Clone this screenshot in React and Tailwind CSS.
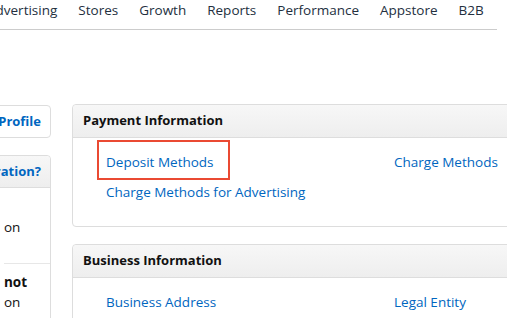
export default function App() {
  const nav = ["Advertising", "Stores", "Growth", "Reports", "Performance", "Appstore", "B2B"];
  return (
    <div className="w-[507px] h-[318px] overflow-hidden bg-white font-['Open_Sans',sans-serif] text-[13.5px]">
      <div className="w-[497px] h-[30px] border-b border-[#cccccc] overflow-hidden">
        <div className="flex gap-[21px] -ml-[13px] leading-[20px] text-[#232f3e]">
          {nav.map((n) => (
            <span key={n} className="whitespace-nowrap">{n}</span>
          ))}
        </div>
      </div>
      <div className="flex gap-[21px] w-[497px]">
        <div className="w-[51px] shrink-0 overflow-hidden pt-[75px]">
          <div className="w-[200px] -ml-[149px]">
            <div className="h-[33px] border border-[#dddddd] rounded-[4px] flex items-center justify-end pr-[9px] font-bold text-[13px] text-[#0066c0] whitespace-nowrap">
              View Your Profile
            </div>
            <div className="mt-[17px] border border-[#dddddd] rounded-t-[4px] h-[200px]">
              <div className="h-[32px] bg-gradient-to-b from-[#f7f7f7] to-[#eeeeee] border-b border-[#dddddd] rounded-t-[4px] flex items-center justify-end pr-[9px] font-bold text-[13px] text-[#0066c0] whitespace-nowrap">
                Need help with registration?
              </div>
              <div className="pl-[152px] text-[#111111] leading-[20px]">
                <div className="pt-[29px] pb-[26px] whitespace-nowrap">on</div>
                <div className="border-t border-[#e7e7e7] pt-[8px]">
                  <div className="font-bold">not</div>
                  <div>on</div>
                </div>
              </div>
            </div>
          </div>
        </div>
        <div className="flex-1 pt-[74px] flex flex-col gap-[17px]">
          <div className="border border-[#dddddd] rounded-[4px]">
            <div className="h-[33px] bg-gradient-to-b from-[#f7f7f7] to-[#eeeeee] border-b border-[#dddddd] rounded-t-[4px] flex items-center pl-[10px] font-bold text-[13px] text-[#111111]">
              Payment Information
            </div>
            <div className="grid grid-cols-[288px_1fr] px-[33px] pt-[14px] pb-[24px] gap-y-[10px] leading-[20px] text-[#0066c0] whitespace-nowrap">
              <div className="relative">
                <span>Deposit Methods</span>
                <div className="absolute -left-[9px] -top-[12px] w-[133px] h-[40px] border-2 border-[#ea4a33]"></div>
              </div>
              <div>Charge Methods</div>
              <div>Charge Methods for Advertising</div>
              <div></div>
            </div>
          </div>
          <div className="border border-[#dddddd] rounded-t-[4px] h-[120px]">
            <div className="h-[33px] bg-gradient-to-b from-[#f7f7f7] to-[#eeeeee] border-b border-[#dddddd] rounded-t-[4px] flex items-center pl-[10px] font-bold text-[13px] text-[#111111]">
              Business Information
            </div>
            <div className="grid grid-cols-[288px_1fr] px-[33px] pt-[14px] leading-[20px] text-[#0066c0] whitespace-nowrap">
              <div>Business Address</div>
              <div>Legal Entity</div>
            </div>
          </div>
        </div>
      </div>
    </div>
  );
}
